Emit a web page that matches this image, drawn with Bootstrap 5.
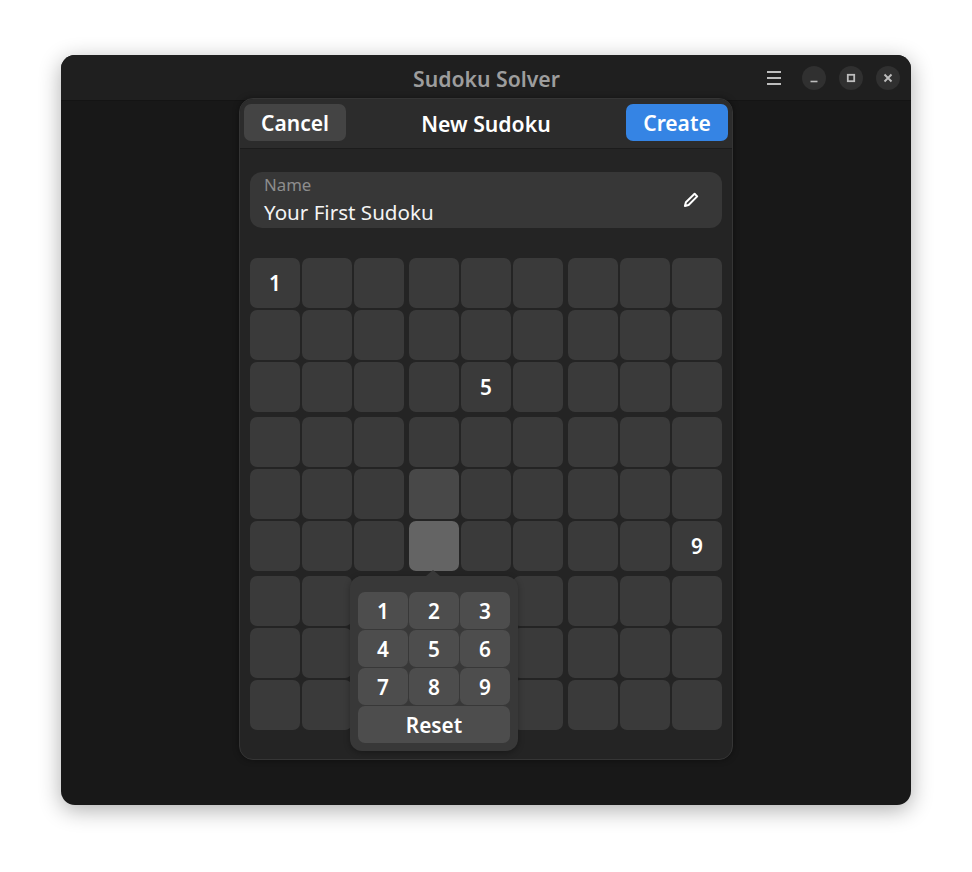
<!DOCTYPE html>
<html>
<head>
  <meta charset="UTF-8">
  <title>Sudoku Solver</title>
  <link href="https://cdn.jsdelivr.net/npm/bootstrap@5.3.3/dist/css/bootstrap.min.css" rel="stylesheet">
  <style>
    body { background: #fff; font-family: "Noto Sans", "Open Sans", sans-serif; color: #fff; padding: 55px 0 0 61px; }
    .app-window { width: 850px; height: 750px; background: #181818; border-radius: 14px; box-shadow: 0 5px 22px rgba(0,0,0,.32); }
    .app-header { height: 46px; background: #1f1f1f; border-bottom: 1px solid #141414; border-radius: 14px 14px 0 0; padding: 0 11px 0 0; }
    .app-title { font-size: 21.2px; font-weight: 600; color: #9d9d9d; line-height: 1; margin-left: 352px; padding-top: 2px; width: 147px; white-space: nowrap; }
    .win-controls { gap: 13px; }
    .menu-icon { margin-right: 8px; }
    .win-btn { width: 24px; height: 24px; border-radius: 50%; background: #303030; }
    .dialog-box { width: 494px; height: 662px; margin-top: -3px; margin-left: 178px; background: #242424; border-radius: 14px; border: 1px solid #353535; box-shadow: 0 0 6px rgba(0,0,0,.4); }
    .dialog-head { height: 50px; padding: 5px 4px 7px; background: #2c2c2c; border-bottom: 1px solid #1c1c1c; border-radius: 13px 13px 0 0; }
    .dialog-title { font-size: 21.2px; font-weight: 600; padding-top: 2px; }
    .head-btn { width: 102px; height: 37px; border: 0; border-radius: 7px; font-size: 21px; font-weight: 600; color: #fff; padding: 2px 0 0; line-height: 1; }
    .head-btn:hover, .head-btn:active { color: #fff; }
    .btn-cancel, .btn-cancel:hover { background: #444; }
    .btn-create, .btn-create:hover { background: #3584e4; }
    .name-row { margin: 23px 10px 30px 10px; height: 56px; background: #373737; border-radius: 12px; padding: 0 23px 0 14px; }
    .name-label { font-size: 16.8px; line-height: 1; color: #8d8d8d; margin-top: 5px; }
    .name-value { font-size: 20.6px; line-height: 1; margin-top: 8px; color: #f4f4f4; }
    .sudoku-board { display: grid; grid-template-columns: repeat(3, 154px); gap: 5px; margin-left: 10px; }
    .sudoku-box { display: grid; grid-template-columns: repeat(3, 50px); grid-auto-rows: 50px; gap: 2px; }
    .sudoku-cell { background: #3a3a3a; border-radius: 7px; font-size: 20.8px; font-weight: 600; padding-top: 2px; }
    .cell-hover { background: #484848; }
    .cell-active { background: #646464; }
    .picker-pop { position: absolute; top: 55px; left: -59px; width: 168px; height: 175px; background: #383838; border-radius: 12px; padding: 16px 8px 8px; box-shadow: 0 2px 6px rgba(0,0,0,.3); z-index: 5; }
    .picker-pop::before { content: ""; position: absolute; top: -6px; left: 76px; border: 7px solid transparent; border-top: 0; border-bottom: 6px solid #383838; }
    .picker-grid { display: grid; grid-template-columns: repeat(3, 50px); grid-auto-rows: 37px; gap: 1px; }
    .picker-key { background: #4d4d4d; border-radius: 7px; font-size: 20.8px; font-weight: 600; padding-top: 2px; }
    .picker-reset { grid-column: 1 / 4; }
  </style>
</head>
<body class="min-vh-100">
  <div class="app-window d-flex flex-column">
    <div class="app-header d-flex align-items-center flex-shrink-0">
      <div class="app-title">Sudoku Solver</div>
      <div class="win-controls d-flex align-items-center ms-auto">
        <svg class="menu-icon" width="14" height="14" viewBox="0 0 14 14"><path d="M0 1h14M0 7h14M0 13h14" stroke="#bdbdbd" stroke-width="2"/></svg>
        <div class="win-btn d-flex align-items-center justify-content-center"><svg width="12" height="12" viewBox="0 0 12 12"><path d="M2.5 9.5h7" stroke="#bdbdbd" stroke-width="1.6"/></svg></div>
        <div class="win-btn d-flex align-items-center justify-content-center"><svg width="12" height="12" viewBox="0 0 12 12"><rect x="2.8" y="2.8" width="6.4" height="6.4" fill="none" stroke="#bdbdbd" stroke-width="1.8"/></svg></div>
        <div class="win-btn d-flex align-items-center justify-content-center"><svg width="12" height="12" viewBox="0 0 12 12"><path d="M2.5 2.5l7 7M9.5 2.5l-7 7" stroke="#bdbdbd" stroke-width="1.9"/></svg></div>
      </div>
    </div>
    <div class="dialog-box">
      <div class="dialog-head d-flex align-items-center justify-content-between">
        <button class="btn head-btn btn-cancel">Cancel</button>
        <div class="dialog-title">New Sudoku</div>
        <button class="btn head-btn btn-create">Create</button>
      </div>
      <div class="name-row d-flex align-items-center justify-content-between">
        <div class="align-self-start">
          <div class="name-label">Name</div>
          <div class="name-value">Your First Sudoku</div>
        </div>
        <svg width="16" height="16" viewBox="0 0 16 16"><path d="M11.6 1.8l2.6 2.6-8.6 8.6-3.7 1 1-3.7z" fill="none" stroke="#fff" stroke-width="2" stroke-linejoin="round"/></svg>
      </div>
      <div id="board" class="sudoku-board"></div>
    </div>
  </div>

  <script>
    // board values by "box,cell"
    const values = { "0,0": "1", "1,7": "5", "5,8": "9" };
    const keys = ["1", "2", "3", "4", "5", "6", "7", "8", "9"];

    let keyHtml = keys.map(k => `<div class="picker-key d-flex align-items-center justify-content-center">${k}</div>`).join("");
    keyHtml += `<div class="picker-key picker-reset d-flex align-items-center justify-content-center">Reset</div>`;
    const picker = `<div class="picker-pop"><div class="picker-grid">${keyHtml}</div></div>`;

    let output = "";
    for (let b = 0; b < 9; b++) {
      output += `<div class="sudoku-box">`;
      for (let c = 0; c < 9; c++) {
        let cls = "";
        let inner = values[b + "," + c] || "";
        if (b === 4 && c === 3) cls = " cell-hover";
        if (b === 4 && c === 6) { cls = " cell-active position-relative"; inner = picker; }
        output += `<div class="sudoku-cell d-flex align-items-center justify-content-center${cls}">${inner}</div>`;
      }
      output += `</div>`;
    }
    document.getElementById("board").innerHTML = output;
  </script>
  <script src="https://cdn.jsdelivr.net/npm/bootstrap@5.3.3/dist/js/bootstrap.bundle.min.js"></script>
</body>
</html>
